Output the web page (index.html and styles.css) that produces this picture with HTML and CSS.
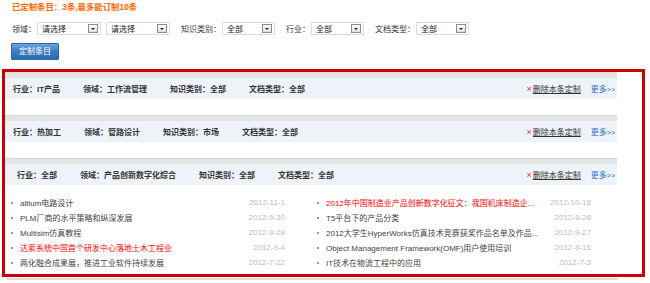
FILE: index.html
```html
<!DOCTYPE html>
<html lang="zh-CN">
<head>
<meta charset="utf-8">
<title>定制条目</title>
<link rel="stylesheet" href="styles.css">
</head>
<body>
<div class="page">
  <div class="title">已定制条目：3条,最多能订制10条</div>

  <div class="filters">
    <span class="lbl">领域：</span>
    <div class="sel sel-wide sel-first"><span>请选择</span><i class="arr"></i></div>
    <div class="sel sel-wide"><span>请选择</span><i class="arr"></i></div>
    <span class="lbl">知识类别：</span>
    <div class="sel"><span>全部</span><i class="arr"></i></div>
    <span class="lbl">行业：</span>
    <div class="sel"><span>全部</span><i class="arr"></i></div>
    <span class="lbl">文档类型：</span>
    <div class="sel"><span>全部</span><i class="arr"></i></div>
  </div>

  <div class="btn-row"><button class="btn">定制条目</button></div>

  <div class="box">
    <div class="panel">
      <div class="sec">
        <div class="strip"></div>
        <div class="head">
          <span class="tag">行业：IT产品</span>
          <span class="tag">领域：工作流管理</span>
          <span class="tag">知识类别：全部</span>
          <span class="tag">文档类型：全部</span>
          <span class="ops"><a class="del"><em>×</em><u>删除本条定制</u></a><a class="more">更多<small>&gt;&gt;</small></a></span>
        </div>
        <div class="empty"></div>
      </div>

      <div class="sec">
        <div class="strip"></div>
        <div class="head">
          <span class="tag">行业：热加工</span>
          <span class="tag">领域：管路设计</span>
          <span class="tag">知识类别：市场</span>
          <span class="tag">文档类型：全部</span>
          <span class="ops"><a class="del"><em>×</em><u>删除本条定制</u></a><a class="more">更多<small>&gt;&gt;</small></a></span>
        </div>
        <div class="empty"></div>
      </div>

      <div class="sec">
        <div class="strip"></div>
        <div class="head head-wide">
          <span class="tag">行业：全部</span>
          <span class="tag">领域：产品创新数字化综合</span>
          <span class="tag">知识类别：全部</span>
          <span class="tag">文档类型：全部</span>
          <span class="ops"><a class="del"><em>×</em><u>删除本条定制</u></a><a class="more">更多<small>&gt;&gt;</small></a></span>
        </div>
        <ul class="list">
          <li><span class="t">altium电路设计</span><span class="d">2012-11-1</span></li>
          <li><span class="t hot">2012年中国制造业产品创新数字化征文：我国机床制造企...</span><span class="d">2012-10-18</span></li>
          <li><span class="t">PLM厂商的水平策略和纵深发展</span><span class="d">2012-9-30</span></li>
          <li><span class="t">T5平台下的产品分类</span><span class="d">2012-9-28</span></li>
          <li><span class="t">Multisim仿真教程</span><span class="d">2012-9-28</span></li>
          <li><span class="t">2012大学生HyperWorks仿真技术竞赛获奖作品名单及作品...</span><span class="d">2012-9-27</span></li>
          <li><span class="t hot">达索系统中国首个研发中心落地土木工程业</span><span class="d">2012-9-4</span></li>
          <li><span class="t">Object Management Framework(OMF)用户使用培训</span><span class="d">2012-8-16</span></li>
          <li><span class="t">两化融合成果展，推进工业软件持续发展</span><span class="d">2012-7-22</span></li>
          <li><span class="t">IT技术在物流工程中的应用</span><span class="d">2012-7-3</span></li>
        </ul>
      </div>
    </div>
  </div>
  <div class="under"></div>
</div>
</body>
</html>
```

FILE: styles.css
```css
* { box-sizing: border-box; }
html, body { margin: 0; padding: 0; background: #fff; }
body {
  font-family: "Liberation Sans", "Noto Sans CJK SC", sans-serif;
  font-size: 8px;
  color: #333;
}
.page { width: 650px; }

.title {
  height: 14px;
  line-height: 14px;
  padding-left: 12px;
  color: #ff6600;
  font-weight: bold;
  font-size: 8.4px;
}

.filters {
  display: flex;
  align-items: center;
  height: 13px;
  margin-top: 8px;
  padding-left: 12px;
}
.lbl { margin-right: 1px; white-space: nowrap; }
.sel {
  display: flex;
  align-items: center;
  justify-content: space-between;
  width: 53px;
  height: 13px;
  border: 1px solid #dcdcdc;
  background: #fff;
  padding: 0 2px 0 4px;
  margin-right: 11px;
  color: #222;
}
.sel-wide { width: 64px; }
.sel-first { margin-right: 5px; }
.arr {
  position: relative;
  width: 10px;
  height: 9px;
  border: 1px solid #8c8c8c;
  background: linear-gradient(#fdfdfd, #dedede);
}
.arr::after {
  content: "";
  position: absolute;
  left: 2px;
  top: 3px;
  border-left: 2px solid transparent;
  border-right: 2px solid transparent;
  border-top: 2px solid #222;
}

.btn-row { margin-top: 8px; padding-left: 11px; height: 17px; }
.btn {
  display: block;
  width: 48px;
  height: 17px;
  padding: 0;
  border: 1px solid #2f66a3;
  border-radius: 1px;
  background: linear-gradient(#6aa6de, #3a7cc2 50%, #2c69ad);
  color: #fff;
  font-family: "Liberation Sans", "Noto Sans CJK SC", sans-serif;
  font-size: 8px;
  line-height: 15px;
}

.box {
  margin: 9px 0 0 2px;
  width: 643px;
  height: 208px;
  border: 3px solid #cc0000;
}
.panel { width: 612px; }

.strip { height: 6px; background: #e4e4e4; border-top: 1px solid #dadada; }
.head {
  display: flex;
  align-items: center;
  height: 21px;
  padding: 0 2px 0 8px;
  background: #eef3f9;
  white-space: nowrap;
}
.head-wide { padding-left: 12px; }
.tag { font-weight: bold; margin-right: 23px; color: #333; }
.ops { margin-left: auto; display: flex; align-items: center; }
.del { color: #333; display: flex; align-items: center; }
.del em { font-style: normal; color: #e63333; margin-right: 1px; font-size: 9px; }
.del u { text-decoration: underline; }
.more { color: #2f77c3; margin-left: 10px; }
.more small { font-size: 7px; }
.empty { height: 16px; }

.list {
  list-style: none;
  margin: 0;
  padding: 10px 0 0 6px;
  display: grid;
  grid-template-columns: 274px 274px;
  column-gap: 32px;
}
.list li {
  display: flex;
  align-items: center;
  height: 15px;
  white-space: nowrap;
}
.list li::before {
  content: "";
  width: 2px;
  height: 2px;
  background: #999;
  margin-right: 7px;
  flex: none;
}
.t { flex: 1; overflow: hidden; color: #444; }
.hot { color: #f00; }
.d { color: #bbb; flex: none; }

.under {
  width: 612px;
  height: 2px;
  margin: 1px 0 0 6px;
  background: #dedede;
}
```
